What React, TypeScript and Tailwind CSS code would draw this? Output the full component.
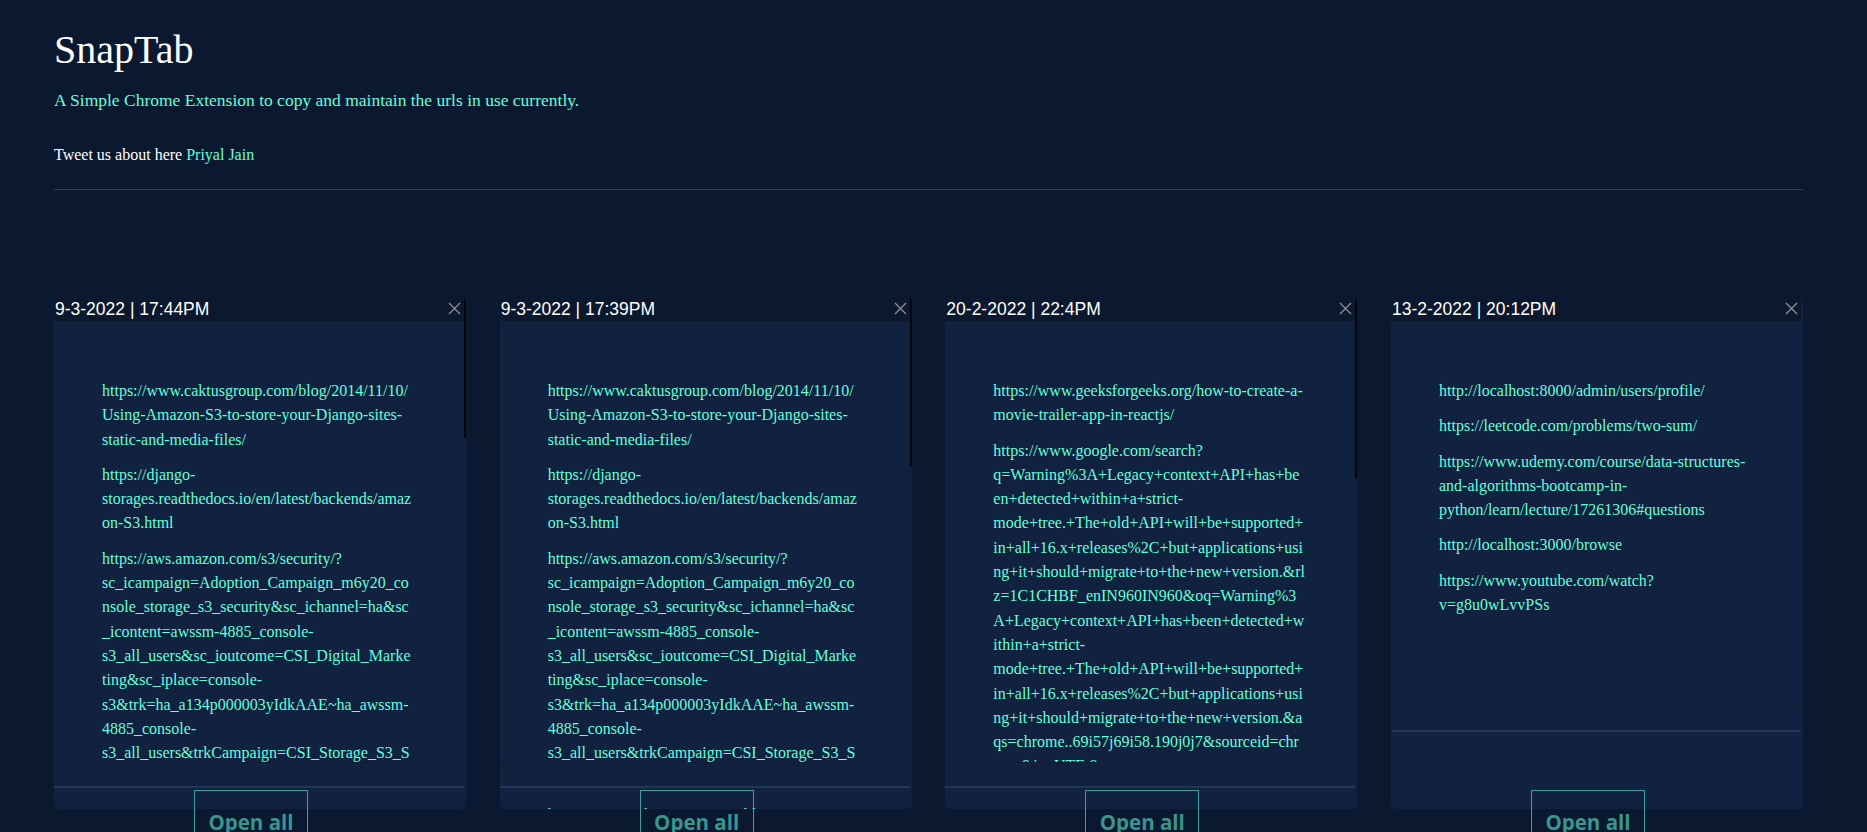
const cards = [
  {
    date: "9-3-2022 | 17:44PM",
    thumb: "h-[141px]",
    links: [
      "https://www.caktusgroup.com/blog/2014/11/10/Using-Amazon-S3-to-store-your-Django-sites-static-and-media-files/",
      "https://django-storages.readthedocs.io/en/latest/backends/amazon-S3.html",
      "https://aws.amazon.com/s3/security/?sc_icampaign=Adoption_Campaign_m6y20_console_storage_s3_security&sc_ichannel=ha&sc_icontent=awssm-4885_console-s3_all_users&sc_ioutcome=CSI_Digital_Marketing&sc_iplace=console-s3&trk=ha_a134p000003yIdkAAE~ha_awssm-4885_console-s3_all_users&trkCampaign=CSI_Storage_S3_Security&trk=console-s3",
      "http://localhost:3000/browse",
    ],
    peek: false,
  },
  {
    date: "9-3-2022 | 17:39PM",
    thumb: "h-[170px]",
    links: [
      "https://www.caktusgroup.com/blog/2014/11/10/Using-Amazon-S3-to-store-your-Django-sites-static-and-media-files/",
      "https://django-storages.readthedocs.io/en/latest/backends/amazon-S3.html",
      "https://aws.amazon.com/s3/security/?sc_icampaign=Adoption_Campaign_m6y20_console_storage_s3_security&sc_ichannel=ha&sc_icontent=awssm-4885_console-s3_all_users&sc_ioutcome=CSI_Digital_Marketing&sc_iplace=console-s3&trk=ha_a134p000003yIdkAAE~ha_awssm-4885_console-s3_all_users&trkCampaign=CSI_Storage_S3_Security&trk=console-s3",
      "http://localhost:3000/browse",
    ],
    peek: true,
  },
  {
    date: "20-2-2022 | 22:4PM",
    thumb: "h-[182px]",
    links: [
      "https://www.geeksforgeeks.org/how-to-create-a-movie-trailer-app-in-reactjs/",
      "https://www.google.com/search?q=Warning%3A+Legacy+context+API+has+been+detected+within+a+strict-mode+tree.+The+old+API+will+be+supported+in+all+16.x+releases%2C+but+applications+using+it+should+migrate+to+the+new+version.&rlz=1C1CHBF_enIN960IN960&oq=Warning%3A+Legacy+context+API+has+been+detected+within+a+strict-mode+tree.+The+old+API+will+be+supported+in+all+16.x+releases%2C+but+applications+using+it+should+migrate+to+the+new+version.&aqs=chrome..69i57j69i58.190j0j7&sourceid=chrome&ie=UTF-8",
    ],
    peek: false,
  },
  {
    date: "13-2-2022 | 20:12PM",
    thumb: "",
    links: [
      "http://localhost:8000/admin/users/profile/",
      "https://leetcode.com/problems/two-sum/",
      "https://www.udemy.com/course/data-structures-and-algorithms-bootcamp-in-python/learn/lecture/17261306#questions",
      "http://localhost:3000/browse",
      "https://www.youtube.com/watch?v=g8u0wLvvPSs",
    ],
    peek: false,
  },
];

const CloseIcon = () => (
  <svg width="13" height="13" viewBox="0 0 13 13" fill="none">
    <path d="M1 1L12 12M12 1L1 12" stroke="#8b9099" strokeWidth="1.3" />
  </svg>
);

const Card = ({ card }: { card: (typeof cards)[number] }) => (
  <div className="flex flex-col">
    <div className="flex h-[512px] overflow-hidden rounded-[5px] bg-[#112240]">
      <div className="flex min-w-0 flex-1 flex-col overflow-hidden">
        <div className="flex h-[24px] shrink-0 items-start justify-between rounded-tl-[4px] bg-[#0b182e]">
          <span className="pl-px font-['Liberation_Sans',Arial,sans-serif] text-[17.5px] leading-[24px] text-white">
            {card.date}
          </span>
          <span className="pt-[5px] pr-[3px]">
            <CloseIcon />
          </span>
        </div>
        <ul className="max-h-[442px] shrink-0 overflow-hidden border-b border-[#0e1d35] pt-[58px] pr-[50px] pb-[78px] pl-[48px]">
          {card.links.map((l, i) => (
            <li key={i} className="mb-[11px] break-words text-[16px] leading-[24.3px] text-[#64ffda]">
              {l}
            </li>
          ))}
        </ul>
        <div className="h-[23px] shrink-0" />
        <div className="flex-1 border-t-2 border-[#223656]">
          {card.peek && (
            <p className="px-[48px] pt-[15px] text-[16px] leading-[24px] text-[#64ffda]">
              https://www.caktusgroup.com/blog/2014/11/10/
            </p>
          )}
        </div>
      </div>
      <div className="w-[2px] shrink-0">
        {card.thumb && <div className={`${card.thumb} w-[2px] bg-[#03060c]`} />}
      </div>
    </div>
    <div className="-mt-[19px] flex justify-center pr-[18px]">
      <button className="relative w-[114px] border border-[#3aa19b] pt-[17px] pb-[12px] font-['Open_Sans',sans-serif] text-[20.5px] leading-[28px] font-bold text-[#3a958f]">
        Open all
      </button>
    </div>
  </div>
);

export default function App() {
  return (
    <div className="h-screen overflow-hidden bg-[#0a192f] pt-[26px] pr-[64px] pl-[54px] font-['Liberation_Serif','Times_New_Roman',serif]">
      <h1 className="text-[40px] leading-[48px] text-white">SnapTab</h1>
      <p className="mt-[13px] text-[17.5px] leading-[27px] text-[#64ffda]">
        A Simple Chrome Extension to copy and maintain the urls in use currently.
      </p>
      <p className="mt-[29px] text-[16px] leading-[24px] text-white">
        Tweet us about here <a className="text-[#64ffda]">Priyal Jain</a>
      </p>
      <div className="mt-[22px] h-px bg-[#2a4259]" />
      <div className="mt-[107px] grid grid-cols-4 gap-x-[33.7px]">
        {cards.map((c, i) => (
          <Card key={i} card={c} />
        ))}
      </div>
    </div>
  );
}
